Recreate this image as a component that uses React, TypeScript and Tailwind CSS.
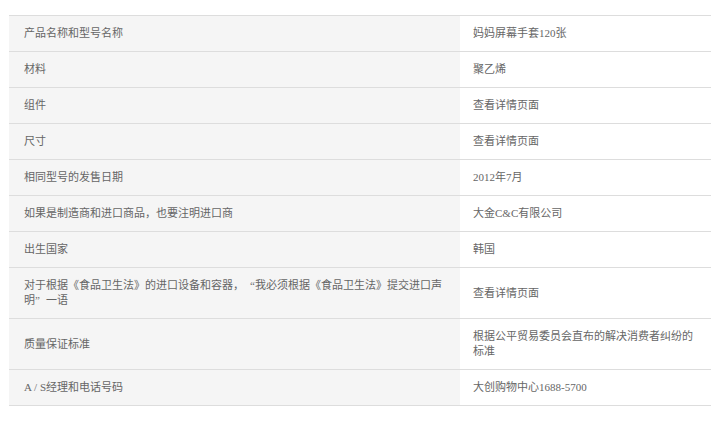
const rows: [React.ReactNode, string][] = [
  ["产品名称和型号名称", "妈妈屏幕手套120张"],
  ["材料", "聚乙烯"],
  ["组件", "查看详情页面"],
  ["尺寸", "查看详情页面"],
  ["相同型号的发售日期", "2012年7月"],
  ["如果是制造商和进口商品，也要注明进口商", "大金C&C有限公司"],
  ["出生国家", "韩国"],
  [
    <>
      对于根据《食品卫生法》的进口设备和容器，
      <span className="inline-block w-[11px] text-right">“</span>
      我必须根据《食品卫生法》提交进口声明
      <span className="inline-block w-[11px] text-left">”</span>一语
    </>,
    "查看详情页面",
  ],
  ["质量保证标准", "根据公平贸易委员会直布的解决消费者纠纷的标准"],
  ["A / S经理和电话号码", "大创购物中心1688-5700"],
];

export default function App() {
  return (
    <div className="w-[721px] h-[440px] bg-white pt-[15px] pl-[9px]">
      <table
        className="w-[702px] border-collapse border-t border-[#dddddd] text-[11px] leading-[15px] text-[#666666]"
        style={{ fontFamily: '"Liberation Serif", "Noto Sans CJK SC", serif' }}
      >
        <tbody>
          {rows.map(([label, value], i) => (
            <tr key={i} className="border-b border-[#dddddd]">
              <th className="w-[451px] bg-[#f5f5f5] px-[15px] py-[10px] text-left align-middle font-normal">
                {label}
              </th>
              <td className="px-[13px] py-[10px] text-left align-middle">{value}</td>
            </tr>
          ))}
        </tbody>
      </table>
    </div>
  );
}
